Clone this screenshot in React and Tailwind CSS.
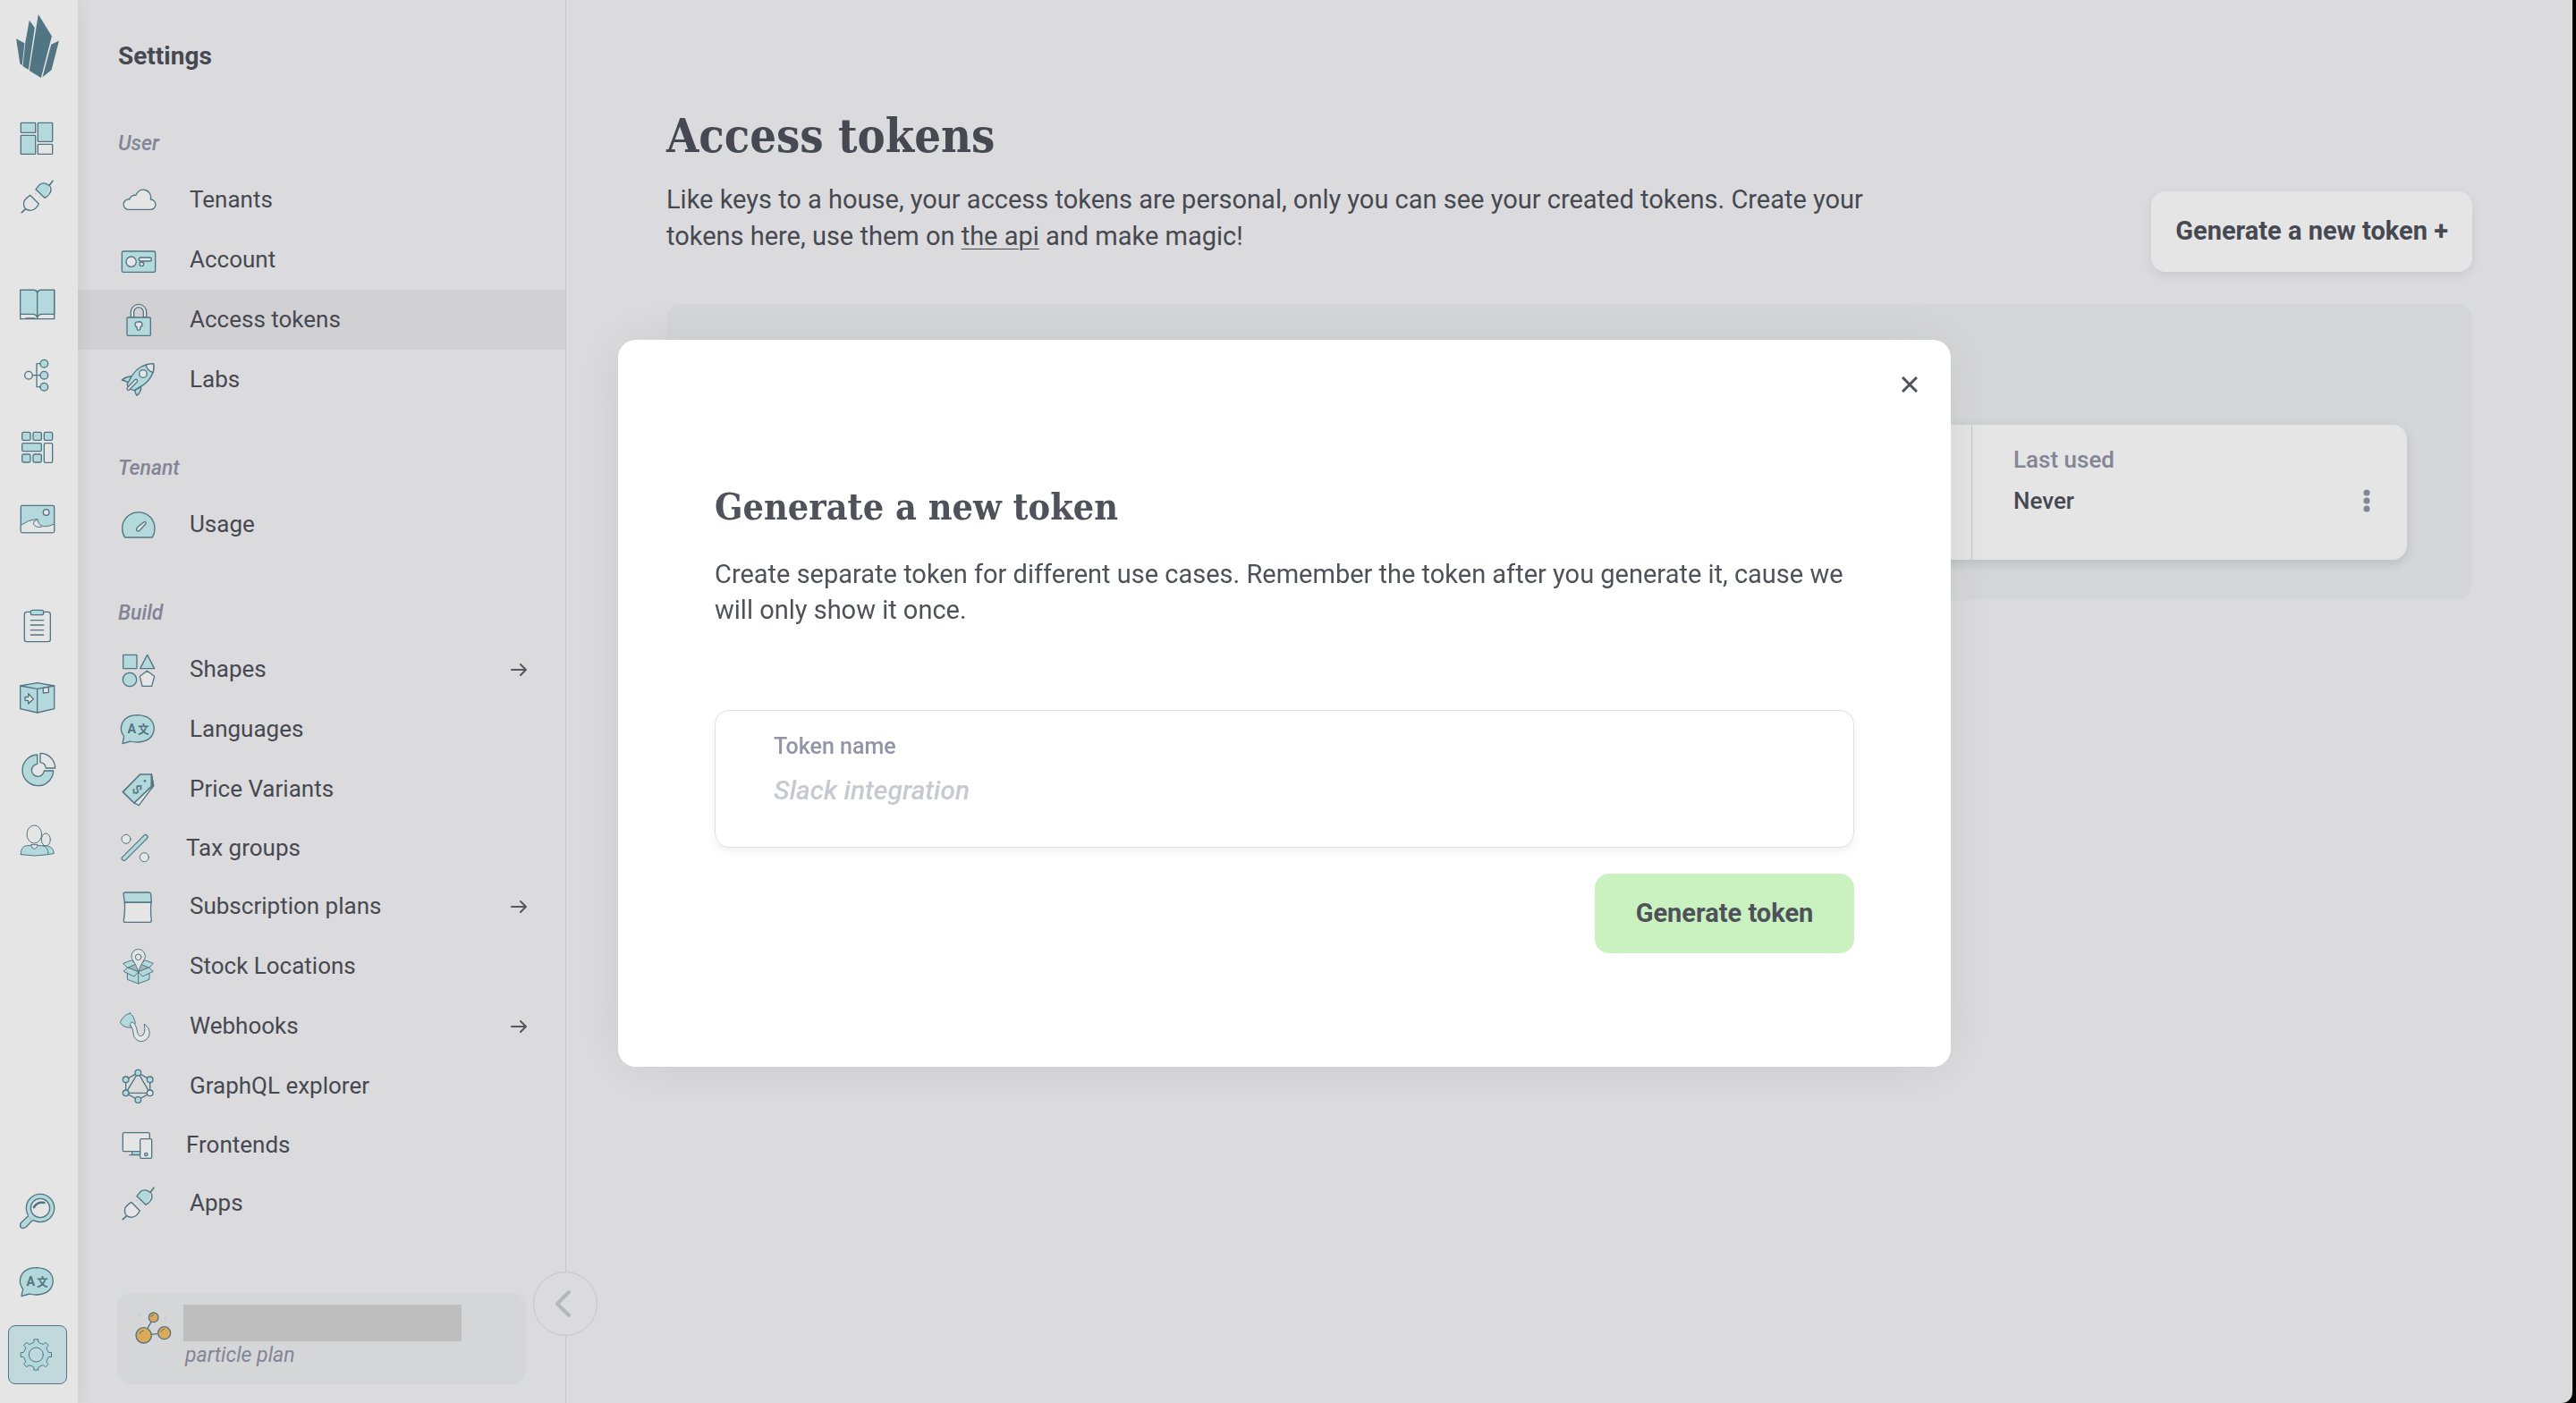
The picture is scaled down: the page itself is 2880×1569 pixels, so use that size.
import { useState } from 'react'

const line = '#5b8391'
const teal = '#c8f2f5'

// all the icons share one 138 grid, small ones use 126
const Svg = ({ size = 46, sw = 4, children }) => (
	<svg width={size} height={size} viewBox={`0 0 ${size * 3} ${size * 3}`} fill={teal} stroke={line} strokeWidth={sw}
		strokeLinejoin="round" strokeLinecap="round" aria-hidden="true" className="shrink-0">
		{children}
	</svg>
)

let gearPath = () => {
	let pts = []
	for (let i = 0; i < 8; i++) {
		let a = i * Math.PI / 4;
		[[-0.3, 41], [-0.17, 43], [-0.14, 52], [0.14, 52], [0.17, 43], [0.3, 41]].forEach(([d, r]) => {
			pts.push(`${(64 + r * Math.sin(a + d)).toFixed(1)} ${(69 - r * Math.cos(a + d)).toFixed(1)}`)
		})
	}
	return 'M' + pts.join('L') + 'Z'
}

const Logo = () => (
	<svg width="48" height="71" viewBox="51 48 143 212" fill="#5b8391" aria-hidden="true">
		<path d="M51 129L79 144L71 218L64 214Z" />
		<path d="M95 68L113 93L92 233L73 221L82 140Z" />
		<path d="M125 48L170 121L134 260L95 236Z" />
		<path d="M168 149L194 136L169 234L139 258Z" />
	</svg>
)

const Dashboard = () => (
	<Svg>
		<rect x="13" y="16" width="49" height="33" rx="2" />
		<rect x="13" y="58" width="49" height="63" rx="2" />
		<rect x="70" y="16" width="49" height="63" rx="2" />
		<rect x="70" y="88" width="49" height="33" rx="2" fill="#fff" />
	</Svg>
)

const Plug = () => (
	<Svg>
		<path d="M120 16L107 33M31 108L16 122" fill="none" strokeWidth="5" />
		<path d="M63 44L93 73Q114 60 114 45Q113 34 106 30Q90 18 76 28Z" />
		<path d="M98 66Q112 54 109 36" stroke="#fff" fill="none" strokeWidth="3" />
		<path d="M44 64L73 93Q64 112 46 115Q34 115 27 108Q20 98 24 83Q32 72 44 64Z" fill="#fff" />
		<path d="M63 59h.1M76 70h.1" strokeWidth="2" />
	</Svg>
)

const Book = () => (
	<Svg>
		<path d="M11 22H58Q67 24 68 31Q69 24 78 22H125V119H11Z" fill="#fff" />
		<path d="M11 22H58Q67 24 68 31Q69 24 78 22H125V103H82Q70 105 68 114Q66 105 55 103H11Z" />
		<path d="M68 31V116M30 117H60" fill="none" />
	</Svg>
)

const Tree = () => (
	<Svg>
		<path d="M80 29H66V107H80M52 68H80" fill="none" />
		<circle cx="39" cy="68" r="13" fill="#fff" />
		<circle cx="91" cy="29" r="13" />
		<circle cx="91" cy="68" r="13" />
		<circle cx="91" cy="107" r="13" />
	</Svg>
)

const Blocks = () => (
	<Svg>
		<rect x="17" y="19" width="28" height="27" rx="5" />
		<rect x="54" y="19" width="28" height="27" rx="5" />
		<rect x="91" y="19" width="28" height="27" rx="5" />
		<rect x="17" y="56" width="65" height="27" rx="4" />
		<rect x="91" y="56" width="28" height="65" rx="4" fill="#fff" />
		<rect x="17" y="93" width="28" height="27" rx="5" />
		<rect x="54" y="93" width="28" height="27" rx="5" />
	</Svg>
)

const Picture = () => (
	<Svg>
		<rect x="13" y="25" width="112" height="91" rx="5" />
		<path d="M13 91Q38 72 68 70Q71 72 70 78Q74 94 92 95Q110 95 125 87V111Q125 116 120 116H18Q13 116 13 111Z" fill="#fff" strokeWidth="3" />
		<path d="M68 72Q54 76 55 86Q60 100 82 97" fill="none" strokeWidth="3" />
		<circle cx="98" cy="48" r="10" fill="#fff" />
	</Svg>
)

const Clipboard = () => (
	<Svg>
		<rect x="25" y="22" width="87" height="100" rx="8" fill="#fff" />
		<rect x="46" y="16" width="43" height="16" rx="6" />
		<path d="M46 50H89M46 66H89M46 83H89M46 99H89" fill="none" />
	</Svg>
)

const Box = () => (
	<Svg>
		<path d="M11 30L68 20L125 30V107L68 120L11 107Z" />
		<path d="M11 30L68 40L125 30M68 40V120" fill="none" />
		<path d="M88 37L106 34V52L88 54Z" fill="#fff" />
		<path d="M27 67L38 68V56L55 74L38 90V80L27 78Z" fill="#fff" />
	</Svg>
)

const Pie = () => (
	<Svg>
		<path d="M68 21A52 52 0 1 0 122 75H91A21 21 0 1 1 68 52Z" />
		<path d="M78 16A50 50 0 0 1 128 66H97A22 22 0 0 0 78 47Z" fill="#fff" />
	</Svg>
)

const Users = () => (
	<Svg sw="3">
		<ellipse cx="97" cy="66" rx="15" ry="21" fill="#fff" />
		<path d="M88 86Q122 84 124 112Q114 116 100 115Z" />
		<path d="M13 116Q12 87 34 86L84 86Q105 88 105 116Q60 124 13 116Z" />
		<path d="M47 84Q50 97 58 97Q67 96 69 84Z" fill="#fff" />
		<ellipse cx="58" cy="48" rx="25" ry="30" fill="#fff" />
	</Svg>
)

const Search = () => (
	<Svg>
		<path d="M39 85L13 110Q8 119 14 126Q22 130 30 124L55 98Z" />
		<circle cx="78" cy="60" r="47" />
		<path d="M41 87L52 97" stroke={teal} strokeWidth="7" />
		<circle cx="78" cy="60" r="32" fill="#fff" />
		<path d="M57 57Q68 38 91 42" fill="none" strokeWidth="8" />
	</Svg>
)

const Lang = () => (
	<Svg>
		<path d="M15 116L20 91Q10 80 10 64Q14 21 66 20Q118 22 121 65Q118 108 66 111Q50 111 42 108Z" />
		<g fill={line} stroke="none" textAnchor="middle" style={{ fontFamily: 'Roboto, "Noto Sans CJK SC", sans-serif', fontWeight: 700 }}>
			<text x="46" y="81" fontSize="43">A</text>
			<text x="85" y="80" fontSize="38">文</text>
		</g>
	</Svg>
)

const Gear = () => (
	<Svg sw="3">
		<path d={gearPath()} />
		<circle cx="64" cy="69" r="24" fill="#d7f2f5" />
	</Svg>
)

const Cloud = () => (
	<Svg>
		<path d="M33 100A17 17 0 0 1 38 66A19 19 0 0 1 60 52A25 25 0 0 1 109 66A17 17 0 0 1 109 100Z" fill="#fff" />
	</Svg>
)

const Card = () => (
	<Svg>
		<rect x="13" y="39" width="112" height="70" rx="5" />
		<circle cx="44" cy="74" r="17" fill="#fff" />
		<rect x="70" y="60" width="42" height="12" rx="6" fill="#fff" />
		<circle cx="79" cy="82" r="7" fill="#fff" />
	</Svg>
)

const Lock = () => (
	<Svg>
		<path d="M43 60V42A26 26 0 0 1 95 42V60H85V42A16 16 0 0 0 53 42V60Z" fill="#fff" />
		<rect x="30" y="60" width="79" height="61" rx="3" />
		<path d="M69 75A9 9 0 0 1 75 92L74 100Q69 106 64 100L63 92A9 9 0 0 1 69 75Z" fill="#fff" />
	</Svg>
)

const Rocket = () => (
	<Svg>
		<path d="M13 69Q26 57 46 57L34 78Q24 71 13 69Z" />
		<path d="M63 121Q78 108 77 92L56 103Q58 114 63 121Z" />
		<path d="M119 15Q74 14 48 52L30 84Q40 102 54 104L84 86Q124 56 119 15Z" />
		<path d="M119 15Q106 14 93 18Q98 38 118 44Q121 28 119 15Z" fill="#fff" />
		<circle cx="84" cy="48" r="13" fill="#fff" />
		<path d="M60 72L35 98" strokeWidth="14" />
		<path d="M60 72L35 98" stroke="#fff" strokeWidth="6" />
	</Svg>
)

const Gauge = () => (
	<Svg>
		<path d="M23 111Q14 98 14 80A54 53 0 0 1 123 80Q123 98 115 111Z" />
		<path d="M92 59Q95 62 92 66L72 88Q66 92 63 88Q60 83 66 76L86 60Q90 57 92 59Z" fill="#fff" />
	</Svg>
)

const Shapes = () => (
	<Svg>
		<rect x="17" y="19" width="46" height="46" rx="2" />
		<path d="M98 19L122 65H74Z" />
		<circle cx="39" cy="102" r="23" />
		<path d="M97 73L122 91L113 124H81L73 91Z" fill="#fff" />
	</Svg>
)

const Tag = () => (
	<Svg>
		<path d="M112 18L119 56L70 122L54 114Z" fill="#fff" />
		<path d="M112 18L119 56L112 66Z" fill={line} />
		<path d="M74 18H112V58L54 114L16 77Z" strokeWidth="5" />
		<circle cx="90" cy="40" r="4" fill={line} stroke="none" />
		<text x="64" y="84" fontSize="44" textAnchor="middle" fill={line} stroke="none" transform="rotate(45 64 69)" style={{ fontFamily: 'Roboto, sans-serif', fontWeight: 500 }}>$</text>
	</Svg>
)

const Percent = () => (
	<Svg size={42}>
		<path d="M92 27L20 99" strokeWidth="18" />
		<path d="M92 27L20 99" stroke={teal} strokeWidth="11" />
		<circle cx="27" cy="34" r="15" fill="#fff" strokeWidth="3" />
		<circle cx="88" cy="95" r="15" fill="#fff" strokeWidth="3" />
	</Svg>
)

const Calendar = () => (
	<Svg>
		<path d="M22 54H111Q108 84 112 114Q112 121 106 121H24Q18 121 19 114Q24 84 22 54Z" fill="#fff" />
		<path d="M24 21H104Q109 21 110 27L112 54H22L18 27Q18 21 24 21Z" />
	</Svg>
)

const Stock = () => (
	<Svg sw="3">
		<path d="M18 58L44 48L68 62L92 48L118 58L104 73L68 88L32 73Z" />
		<path d="M32 73L68 57L104 73L68 88Z" fill="#b4cdd1" />
		<path d="M31 92V112L68 126L105 112V92L68 84Z" />
		<path d="M32 73L18 85L54 102L68 87ZM104 73L118 85L82 102L68 87Z" />
		<path d="M68 87V126" />
		<path d="M68 85Q60 62 50 48A23 23 0 1 1 86 48Q76 62 68 85Z" fill="#fff" />
		<circle cx="68" cy="37" r="10" fill="#fff" />
	</Svg>
)

const Hook = () => (
	<Svg sw="3">
		<path d="M40 24Q54 34 58 58L50 72Q18 76 7 55Q16 32 40 24Z" />
		<path d="M42 66Q38 54 48 54Q60 60 64 84Q66 100 76 101Q94 98 88 60Q106 74 106 90Q102 118 76 119Q54 116 51 92Q52 78 42 66Z" fill="#fff" />
	</Svg>
)

const Graph = () => (
	<Svg>
		<path d="M67 23L107 46V91L67 114L26 91V46Z" fill="none" />
		<path d="M67 23L107 91H26Z" fill="none" />
		<circle cx="67" cy="23" r="10" />
		<circle cx="107" cy="46" r="10" />
		<circle cx="107" cy="91" r="10" fill="#fff" />
		<circle cx="67" cy="114" r="10" />
		<circle cx="26" cy="91" r="10" />
		<circle cx="26" cy="46" r="10" />
	</Svg>
)

const Screens = () => (
	<Svg size={42}>
		<rect x="16" y="23" width="90" height="63" rx="4" fill="#fff" />
		<rect x="47" y="86" width="27" height="11" />
		<path d="M39 98H74" />
		<rect x="74" y="44" width="39" height="65" rx="4" fill="#fff" />
		<circle cx="94" cy="96" r="5" />
	</Svg>
)

const Particle = () => (
	<Svg>
		<path d="M38 103L71 43M38 103L107 95" fill="none" />
		<g fill="#f4bd61">
			<circle cx="38" cy="103" r="26" />
			<circle cx="107" cy="95" r="21" />
			<circle cx="71" cy="43" r="16" />
		</g>
		<path d="M24 98Q27 88 37 87M96 91Q98 83 106 82M63 40Q65 34 71 34" fill="none" strokeWidth="3" />
		<path d="M27 35h.1M110 45h.1" stroke="#e4e5e7" strokeWidth="9" />
	</Svg>
)

const Arrow = () => (
	<svg width="20" height="16" viewBox="0 0 20 16" fill="none" stroke="#5f6168" strokeWidth="2" strokeLinecap="round" strokeLinejoin="round" aria-hidden="true">
		<path d="M2 8H18M12 2L18 8L12 14" />
	</svg>
)

const rail = [
	[['Dashboard', Dashboard], ['Apps', Plug]],
	[['Catalogue', Book], ['Topics', Tree], ['Grids', Blocks], ['Assets', Picture]],
	[['Orders', Clipboard], ['Fulfilment', Box], ['Reports', Pie], ['Customers', Users]],
]

const menu = [
	{
		title: 'User', items: [
			{ name: 'Tenants', Ic: Cloud },
			{ name: 'Account', Ic: Card },
			{ name: 'Access tokens', Ic: Lock },
			{ name: 'Labs', Ic: Rocket },
		]
	},
	{
		title: 'Tenant', items: [
			{ name: 'Usage', Ic: Gauge },
		]
	},
	{
		title: 'Build', items: [
			{ name: 'Shapes', Ic: Shapes, more: true },
			{ name: 'Languages', Ic: Lang },
			{ name: 'Price Variants', Ic: Tag },
			{ name: 'Tax groups', Ic: Percent, small: true },
			{ name: 'Subscription plans', Ic: Calendar, more: true },
			{ name: 'Stock Locations', Ic: Stock },
			{ name: 'Webhooks', Ic: Hook, more: true },
			{ name: 'GraphQL explorer', Ic: Graph },
			{ name: 'Frontends', Ic: Screens, small: true },
			{ name: 'Apps', Ic: Plug },
		]
	},
]

const Rail = () => (
	<nav aria-label="Main" className="relative z-10 flex w-[87px] shrink-0 flex-col items-center bg-white pt-4 pr-1 pb-[21px] shadow-[0_0_20px_rgba(0,0,0,0.08)]">
		<a href="#" aria-label="Home"><Logo /></a>
		{rail.map((group, i) => (
			<div key={i} className={`flex flex-col ${i ? 'mt-[74px] gap-[34px]' : 'mt-[45px] gap-[19px]'}`}>
				{group.map(([name, Ic]) => <a key={name} href="#" aria-label={name}><Ic /></a>)}
			</div>
		))}
		<div className="mt-auto flex flex-col items-center">
			<a href="#" aria-label="Search" className="mb-[34px]"><Search /></a>
			<a href="#" aria-label="Language" className="mb-[25px]"><Lang /></a>
			<a href="#" aria-label="Settings" className="flex size-[66px] items-center justify-center rounded-lg border border-[#5b8391] bg-[#d7f2f5]"><Gear /></a>
		</div>
	</nav>
)

const Sidebar = ({ active }) => (
	<aside className="relative flex w-[546px] shrink-0 flex-col border-r border-[#dedee1]">
		<h2 className="pt-10 pb-[45px] pl-[45px] text-[28px] leading-[46px] font-bold">Settings</h2>
		<div className="flex flex-col gap-9">
			{menu.map(({ title, items }) => (
				<section key={title}>
					<h3 className="pl-[45px] text-[23px] leading-[59px] font-medium text-[#9295a8] italic">{title}</h3>
					{items.map(({ name, Ic, more, small }) => (
						<a key={name} href="#" className={`flex items-center pr-[42px] pl-[45px] text-[26px] ${small ? 'h-16' : 'h-[67px]'} ${name == active ? 'bg-[#e9e9eb]' : ''}`}>
							<Ic />
							<span className="grow pl-[34px]">{name}</span>
							{more && <Arrow />}
						</a>
					))}
				</section>
			))}
		</div>

		<div className="mx-11 mt-auto mb-[21px] flex rounded-2xl bg-[#eeeff1] py-[13px] pl-[17px]">
			<Particle />
			<div className="pl-[11px]">
				<div className="h-[41px] w-[311px] bg-[#d4d4d4]" />
				<div className="pb-[3px] pl-0.5 text-[23px] leading-8 text-[#9295a8] italic">particle plan</div>
			</div>
		</div>

		<button aria-label="Collapse menu" className="absolute -right-9 bottom-[75px] z-10 flex size-[72px] items-center justify-center rounded-full border border-[#dedee1] bg-[#f4f4f6] pr-1.5">
			<svg width="20" height="32" viewBox="0 0 20 32" fill="none" stroke="#cbccce" strokeWidth="4" strokeLinecap="round" strokeLinejoin="round" aria-hidden="true">
				<path d="M17 3L4 16L17 29" />
			</svg>
		</button>
	</aside>
)

const Tokens = ({ onNew }) => (
	<main className="grow px-28 pt-[122px]">
		<div className="flex items-end justify-between gap-8">
			<div className="max-w-[1400px] pb-[19px]">
				<h1 className="font-['Roboto_Slab','DejaVu_Serif_Condensed','DejaVu_Serif',serif] text-[52px] leading-[60px] font-bold">Access tokens</h1>
				<p className="pt-[21px] text-[29px] leading-[41px]">
					Like keys to a house, your access tokens are personal, only you can see your created tokens. Create your tokens here, use them on <a href="#" className="underline decoration-1 underline-offset-4">the api</a> and make magic!
				</p>
			</div>
			<button onClick={onNew} className="h-[90px] shrink-0 rounded-2xl bg-white px-[27px] text-[29px] font-bold shadow-[0_4px_12px_rgba(0,0,0,0.08)]">Generate a new token +</button>
		</div>

		<div className="mt-9 rounded-2xl bg-[#eeeff1] px-[73px] pt-[135px] pb-[45px]">
			<div className="flex justify-end rounded-2xl bg-white shadow-[0_4px_14px_rgba(0,0,0,0.12)]">
				<div className="w-[487px] border-l border-[#dcdcdf] pt-4 pr-[33px] pb-[43px] pl-[46px] text-[26px] leading-[46px] font-medium">
					<div className="text-[#9295a8]">Last used</div>
					<div className="flex items-center justify-between">
						Never
						<button aria-label="Token options">
							<svg width="24" height="28" viewBox="0 0 24 28" fill="#9295a8" aria-hidden="true">
								<circle cx="12" cy="5" r="3.5" />
								<circle cx="12" cy="14" r="3.5" />
								<circle cx="12" cy="23" r="3.5" />
							</svg>
						</button>
					</div>
				</div>
			</div>
		</div>
	</main>
)

const Modal = ({ onClose }) => {
	const [name, setName] = useState('')

	return (
		<div className="fixed inset-0 z-20 flex items-center justify-center bg-black/10 pt-1 pr-2">
			<div role="dialog" aria-labelledby="modal-title" className="relative w-[1490px] max-w-full rounded-[20px] bg-white px-[108px] pt-[163px] pb-[127px] shadow-[0_0_64px_rgba(0,0,0,0.08)]">
				<button aria-label="Close" onClick={onClose} className="absolute top-[30px] right-[26px] flex size-10 items-center justify-center">
					<svg width="18" height="18" viewBox="0 0 18 18" stroke="#4f525b" strokeWidth="3" aria-hidden="true">
						<path d="M1 1L17 17M17 1L1 17" />
					</svg>
				</button>
				<h2 id="modal-title" className="font-['Roboto_Slab','DejaVu_Serif_Condensed','DejaVu_Serif',serif] text-[41px] leading-[48px] font-bold">Generate a new token</h2>
				<p className="pt-[31px] text-[29px] leading-10">Create separate token for different use cases. Remember the token after you generate it, cause we will only show it once.</p>

				<form onSubmit={e => e.preventDefault()} className="flex flex-col items-end pt-[92px]">
					<div className="w-full rounded-2xl border border-[#dfe0e3] px-[65px] pt-[22px] pb-10 shadow-[0_4px_10px_rgba(0,0,0,0.06)]">
						<label htmlFor="token" className="block text-[25px] leading-9 font-medium text-[#9295a8]">Token name</label>
						<input id="token" type="text" value={name} onChange={e => setName(e.target.value)} placeholder="Slack integration"
							className="mt-1.5 block h-12 w-full text-[30px] font-medium outline-none placeholder:text-[#c7c8d1] placeholder:italic" />
					</div>
					<button className="mt-[29px] h-[89px] w-[290px] rounded-2xl bg-[#caf2c0] text-[29px] font-bold">Generate token</button>
				</form>
			</div>
		</div>
	)
}

function App() {
	const [open, setOpen] = useState(true)

	return (
		<div className="bg-black pr-1 font-[Roboto,sans-serif] text-[#4f525b]">
			<div className="flex min-h-screen overflow-hidden rounded-br-xl bg-[#f4f4f6]">
				<Rail />
				<Sidebar active="Access tokens" />
				<Tokens onNew={() => setOpen(true)} />
			</div>
			{open && <Modal onClose={() => setOpen(false)} />}
		</div>
	)
}

export default App
